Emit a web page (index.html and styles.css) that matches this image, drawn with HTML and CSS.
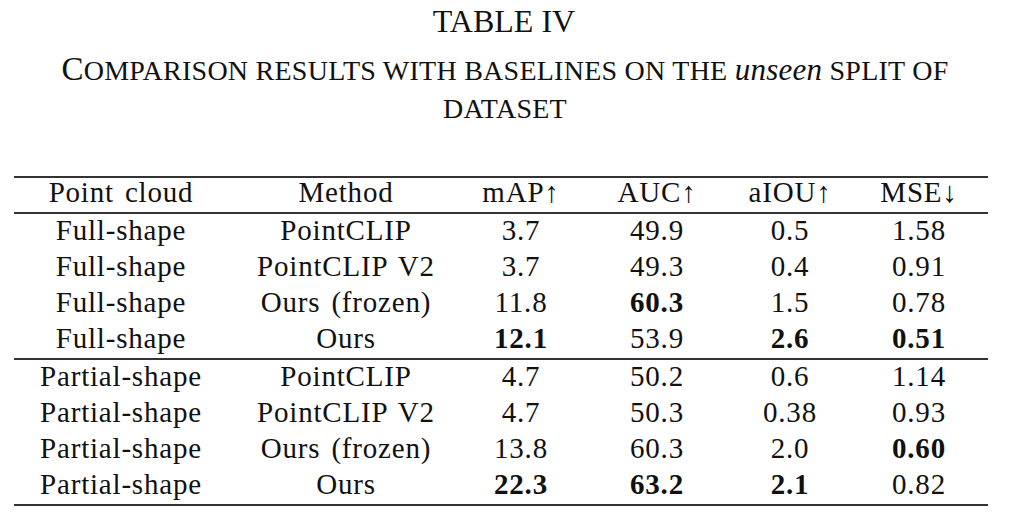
FILE: index.html
```html
<!DOCTYPE html>
<html lang="en">
<head>
    <meta charset="UTF-8">
    <meta name="viewport" content="width=device-width, initial-scale=1.0">
    <title>Table IV - Comparison results</title>
    <link rel="stylesheet" href="styles.css">
</head>
<body>

    <div class="page">
        <h2 class="table-no">TABLE IV</h2>
        <p class="caption"><span class="initial">C</span>omparison results with baselines on the <i>unseen</i> split of</p>
        <p class="caption">dataset</p>

        <table class="results">
            <colgroup>
                <col class="col-cloud">
                <col class="col-method">
                <col class="col-map">
                <col class="col-auc">
                <col class="col-aiou">
                <col class="col-mse">
            </colgroup>
            <thead>
                <tr>
                    <th>Point cloud</th>
                    <th>Method</th>
                    <th>mAP↑</th>
                    <th>AUC↑</th>
                    <th>aIOU↑</th>
                    <th>MSE↓</th>
                </tr>
            </thead>
            <tbody class="group">
                <tr>
                    <td>Full-shape</td>
                    <td>PointCLIP</td>
                    <td>3.7</td>
                    <td>49.9</td>
                    <td>0.5</td>
                    <td>1.58</td>
                </tr>
                <tr>
                    <td>Full-shape</td>
                    <td>PointCLIP V2</td>
                    <td>3.7</td>
                    <td>49.3</td>
                    <td>0.4</td>
                    <td>0.91</td>
                </tr>
                <tr>
                    <td>Full-shape</td>
                    <td>Ours (frozen)</td>
                    <td>11.8</td>
                    <td><b>60.3</b></td>
                    <td>1.5</td>
                    <td>0.78</td>
                </tr>
                <tr>
                    <td>Full-shape</td>
                    <td>Ours</td>
                    <td><b>12.1</b></td>
                    <td>53.9</td>
                    <td><b>2.6</b></td>
                    <td><b>0.51</b></td>
                </tr>
            </tbody>
            <tbody class="group last">
                <tr>
                    <td>Partial-shape</td>
                    <td>PointCLIP</td>
                    <td>4.7</td>
                    <td>50.2</td>
                    <td>0.6</td>
                    <td>1.14</td>
                </tr>
                <tr>
                    <td>Partial-shape</td>
                    <td>PointCLIP V2</td>
                    <td>4.7</td>
                    <td>50.3</td>
                    <td>0.38</td>
                    <td>0.93</td>
                </tr>
                <tr>
                    <td>Partial-shape</td>
                    <td>Ours (frozen)</td>
                    <td>13.8</td>
                    <td>60.3</td>
                    <td>2.0</td>
                    <td><b>0.60</b></td>
                </tr>
                <tr>
                    <td>Partial-shape</td>
                    <td>Ours</td>
                    <td><b>22.3</b></td>
                    <td><b>63.2</b></td>
                    <td><b>2.1</b></td>
                    <td>0.82</td>
                </tr>
            </tbody>
        </table>
    </div>

</body>
</html>
```

FILE: styles.css
```css
body {
    font-family: "Liberation Serif", "Times New Roman", serif;
    background-color: #fff;
    color: #111;
    margin: 0;
    padding: 0;
}

.page {
    width: 1024px;
    height: 521px;
    overflow: hidden;
}

.table-no {
    font-size: 32px;
    font-weight: normal;
    line-height: 40px;
    text-align: center;
    margin: 1px 0 0;
    padding-right: 16px;
}

.caption {
    font-size: 28px;
    line-height: 38px;
    letter-spacing: 0.25px;
    text-transform: uppercase;
    text-align: center;
    margin: 0;
    padding-right: 14px;
}

/* first letter of the caption is a full capital, the rest small caps */
.caption:first-of-type {
    margin-top: 10px;
}

.caption .initial {
    font-size: 33px;
    line-height: 1;
}

.caption i {
    font-size: 31px;
    text-transform: none;
}

.results {
    width: 974px;
    margin: 48px 0 0 14px;
    table-layout: fixed;
    border-collapse: separate;
    border-spacing: 0;
    font-size: 29px;
    letter-spacing: 0.8px;
    word-spacing: 3px;
}

.col-cloud { width: 214px; }
.col-method { width: 236px; }
.col-map { width: 114px; }
.col-auc { width: 158px; }
.col-aiou { width: 108px; }
.col-mse { width: 144px; }

.results th {
    font-weight: normal;
    line-height: 29px;
    padding: 0 0 5px;
    border-top: 2px solid #333;
    border-bottom: 2px solid #333;
    text-align: center;
}

.results td {
    line-height: 32px;
    padding: 0 0 4px;
    text-align: center;
    white-space: nowrap;
}

.results th:last-child,
.results td:last-child {
    padding-left: 6px;
}

.group.last tr:first-child td {
    border-top: 2px solid #333;
}

.group.last tr:last-child td {
    border-bottom: 2px solid #333;
}

.results b {
    font-weight: bold;
}
```
